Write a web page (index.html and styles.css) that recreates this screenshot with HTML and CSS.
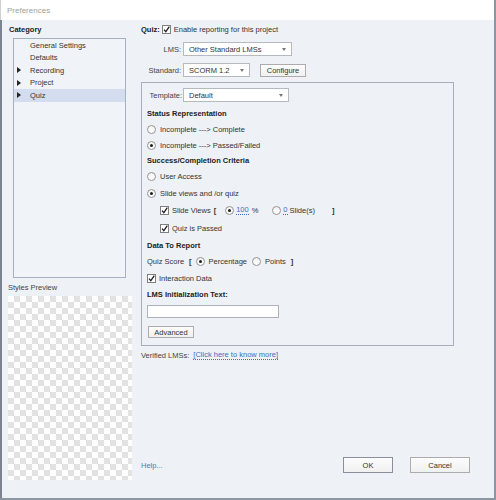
FILE: index.html
```html
<!DOCTYPE html>
<html lang="en">
<head>
    <meta charset="UTF-8">
    <meta name="viewport" content="width=device-width, initial-scale=1.0">
    <title>Preferences</title>
    <link rel="stylesheet" href="styles.css">
</head>
<body>
    <div class="window">
        <div class="titlebar">Preferences</div>

        <div class="content">
            <!-- Category column -->
            <div class="sidebar">
                <div class="side-title">Category</div>
                <ul class="category-list">
                    <li>General Settings</li>
                    <li>Defaults</li>
                    <li class="has-children">Recording</li>
                    <li class="has-children">Project</li>
                    <li class="has-children selected">Quiz</li>
                </ul>
                <div class="side-label">Styles Preview</div>
                <div class="preview"></div>
            </div>

            <!-- Quiz reporting -->
            <div class="main">
                <div class="quiz-row">
                    <b>Quiz:</b>
                    <svg class="check" viewBox="0 0 9 9"><rect x="0.5" y="0.5" width="8" height="8" fill="#fff" stroke="#808080"/><path d="M2 4.6 L3.8 6.6 L7.3 1.6" fill="none" stroke="#222" stroke-width="1.3"/></svg>
                    <span>Enable reporting for this project</span>
                </div>

                <div class="field-row">
                    <label class="field-label">LMS:</label>
                    <div class="select lms-select"><span>Other Standard LMSs</span><i class="arrow"></i></div>
                </div>

                <div class="field-row">
                    <label class="field-label">Standard:</label>
                    <div class="select std-select"><span>SCORM 1.2</span><i class="arrow"></i></div>
                    <button class="btn configure-btn">Configure</button>
                </div>

                <div class="group">
                    <div class="template-row">
                        <label class="template-label">Template:</label>
                        <div class="select template-select"><span>Default</span><i class="arrow"></i></div>
                    </div>

                    <div class="row heading first">Status Representation</div>
                    <div class="row"><span class="radio"></span><span>Incomplete ---&gt; Complete</span></div>
                    <div class="row"><span class="radio on"></span><span>Incomplete ---&gt; Passed/Failed</span></div>

                    <div class="row heading h15">Success/Completion Criteria</div>
                    <div class="row h17"><span class="radio"></span><span>User Access</span></div>
                    <div class="row"><span class="radio on"></span><span>Slide views and /or quiz</span></div>
                    <div class="row h18 indent">
                        <svg class="check" viewBox="0 0 9 9"><rect x="0.5" y="0.5" width="8" height="8" fill="#fff" stroke="#808080"/><path d="M2 4.6 L3.8 6.6 L7.3 1.6" fill="none" stroke="#222" stroke-width="1.3"/></svg>
                        <span>Slide Views</span>
                        <span class="bracket">[</span>
                        <span class="radio on pct-radio"></span>
                        <span class="num">100</span>
                        <span class="unit">%</span>
                        <span class="radio slide-radio"></span>
                        <span class="num">0</span>
                        <span class="unit-slide">Slide(s)</span>
                        <span class="bracket-end">]</span>
                    </div>
                    <div class="row h18 indent">
                        <svg class="check" viewBox="0 0 9 9"><rect x="0.5" y="0.5" width="8" height="8" fill="#fff" stroke="#808080"/><path d="M2 4.6 L3.8 6.6 L7.3 1.6" fill="none" stroke="#222" stroke-width="1.3"/></svg>
                        <span>Quiz is Passed</span>
                    </div>

                    <div class="row heading">Data To Report</div>
                    <div class="row h17 score-row">
                        <span>Quiz Score</span>
                        <span class="bracket">[</span>
                        <span class="radio on"></span>
                        <span>Percentage</span>
                        <span class="radio points-radio"></span>
                        <span>Points</span>
                        <span class="bracket">]</span>
                    </div>
                    <div class="row">
                        <svg class="check" viewBox="0 0 9 9"><rect x="0.5" y="0.5" width="8" height="8" fill="#fff" stroke="#808080"/><path d="M2 4.6 L3.8 6.6 L7.3 1.6" fill="none" stroke="#222" stroke-width="1.3"/></svg>
                        <span>Interaction Data</span>
                    </div>

                    <div class="row heading h17">LMS Initialization Text:</div>
                    <div class="text-input"></div>
                    <button class="btn advanced-btn">Advanced</button>
                </div>

                <div class="verified-row">
                    <span>Verified LMSs:</span>
                    <a class="link">[Click here to know more]</a>
                </div>

                <div class="footer">
                    <a class="help">Help...</a>
                    <div class="actions">
                        <button class="btn ok-btn">OK</button>
                        <button class="btn cancel-btn">Cancel</button>
                    </div>
                </div>
            </div>
        </div>
    </div>
</body>
</html>
```

FILE: styles.css
```css
/* Reset */
* {
    margin: 0;
    padding: 0;
    box-sizing: border-box;
}

body {
    width: 496px;
    height: 500px;
    overflow: hidden;
    background: #fff;
    color: #333;
    font-family: "Liberation Sans", Arial, sans-serif;
    font-size: 7.5px;
}

.window {
    height: 500px;
    display: flex;
    flex-direction: column;
    border-right: 2px solid #8d95a2;
    border-bottom: 2px solid #8d95a2;
}

.titlebar {
    height: 20px;
    display: flex;
    align-items: center;
    padding-left: 6px;
    color: #a0a0a0;
    font-size: 8px;
    background: #fff;
    border-left: 1px solid #d0d0d0;
}

.content {
    flex: 1;
    display: flex;
    background: #eef1f6;
    border-left: 2px solid #7b8391;
}

/* Sidebar */
.sidebar {
    width: 139px;
    display: flex;
    flex-direction: column;
}

.side-title {
    margin: 4px 0 0 7px;
    height: 12px;
    line-height: 12px;
    font-weight: bold;
    color: #222;
}

.category-list {
    list-style: none;
    margin: 2px 0 0 11px;
    width: 113px;
    height: 240px;
    border: 1px solid #a7b0c0;
    background: #f0f3f8;
}

.category-list li {
    height: 12.5px;
    display: flex;
    align-items: center;
    color: #333;
}

.category-list li::before {
    content: "";
    width: 0;
    height: 0;
    border: 3px solid transparent;
    border-left: 4px solid #222;
    margin: 0 6px 0 3px;
    visibility: hidden;
}

.category-list li.has-children::before {
    visibility: visible;
}

.category-list li.selected {
    background: #d3ddef;
}

.side-label {
    margin: 4px 0 0 6px;
    height: 12px;
    line-height: 12px;
    color: #444;
}

.preview {
    margin: 2px 0 0 6px;
    width: 124px;
    height: 184px;
    background: repeating-conic-gradient(#e2e2e2 0 25%, #fff 0 50%) 0 0 / 12px 12px;
}

/* Main column */
.main {
    flex: 1;
    display: flex;
    flex-direction: column;
    padding-top: 3px;
}

.quiz-row {
    height: 12px;
    display: flex;
    align-items: center;
}

.quiz-row b {
    color: #222;
    margin-right: 2px;
}

.check {
    width: 9px;
    height: 9px;
    flex-shrink: 0;
    margin-right: 3px;
}

.field-row {
    margin-top: 7px;
    height: 14px;
    display: flex;
    align-items: center;
}

.field-label {
    width: 40px;
    margin-right: 2px;
    text-align: right;
    color: #444;
}

.select {
    height: 14px;
    display: flex;
    align-items: center;
    justify-content: space-between;
    padding: 0 5px;
    background: #fff;
    border: 1px solid #b4b9c2;
    color: #333;
}

.arrow {
    width: 0;
    height: 0;
    border-left: 2.5px solid transparent;
    border-right: 2.5px solid transparent;
    border-top: 3px solid #777;
}

.lms-select {
    width: 109px;
}

.std-select {
    width: 67px;
}

.btn {
    font-family: inherit;
    font-size: 7.5px;
    color: #333;
    background: linear-gradient(#fdfdfd, #f0f0f0);
    border: 1px solid #acacac;
}

.configure-btn {
    margin-left: 10px;
    width: 46px;
    height: 13px;
}

/* Reporting group */
.group {
    margin-top: 5px;
    width: 313px;
    height: 264px;
    border: 1px solid #a9afb9;
    padding: 5px 5px 0 5px;
    display: flex;
    flex-direction: column;
    align-items: flex-start;
}

.template-row {
    height: 14px;
    display: flex;
    align-items: center;
}

.template-label {
    width: 35px;
    margin-right: 1px;
    text-align: right;
    color: #444;
}

.template-select {
    width: 106px;
}

.row {
    height: 16px;
    display: flex;
    align-items: center;
}

.row.first {
    margin-top: 3px;
}

.row.h15 { height: 15px; }
.row.h17 { height: 17px; }
.row.h18 { height: 18px; }

.heading {
    font-weight: bold;
    color: #222;
}

.indent {
    padding-left: 13px;
}

.radio {
    width: 9px;
    height: 9px;
    flex-shrink: 0;
    margin-right: 4px;
    border: 1px solid #949494;
    border-radius: 50%;
    background: linear-gradient(#f2f2f2, #fff);
    display: flex;
    align-items: center;
    justify-content: center;
}

.radio.on::after {
    content: "";
    width: 3px;
    height: 3px;
    border-radius: 50%;
    background: #1e1e1e;
}

.bracket {
    margin: 0 6px 0 3px;
    font-weight: bold;
}

.pct-radio {
    margin-left: 3px;
    margin-right: 2px;
}

.num {
    color: #3b6fc4;
    border-bottom: 1px dotted #3b6fc4;
    line-height: 8px;
}

.unit {
    margin-left: 3px;
}

.slide-radio {
    margin-left: 14px;
    margin-right: 2px;
}

.unit-slide {
    margin-left: 2px;
}

.bracket-end {
    margin-left: 17px;
    font-weight: bold;
}

.score-row .bracket {
    margin: 0 4px 0 5px;
}

.points-radio {
    margin-left: 5px;
}

.text-input {
    margin-top: 2px;
    width: 132px;
    height: 13px;
    background: #fff;
    border: 1px solid #adb2bb;
}

.advanced-btn {
    margin: 8px 0 0 1px;
    width: 46px;
    height: 12px;
}

.verified-row {
    margin-top: 3px;
    height: 12px;
    display: flex;
    align-items: center;
    color: #444;
}

.link {
    margin-left: 4px;
    color: #3b6fc4;
    border-bottom: 1px dotted #3b6fc4;
    line-height: 9px;
}

/* Footer */
.footer {
    margin-top: auto;
    padding: 0 24px 25px 0;
    display: flex;
    align-items: center;
    justify-content: space-between;
}

.help {
    color: #4a7bc4;
}

.actions {
    display: flex;
    gap: 17px;
}

.ok-btn {
    width: 50px;
    height: 16px;
    border-color: #8a8f99;
}

.cancel-btn {
    width: 60px;
    height: 16px;
}
```
